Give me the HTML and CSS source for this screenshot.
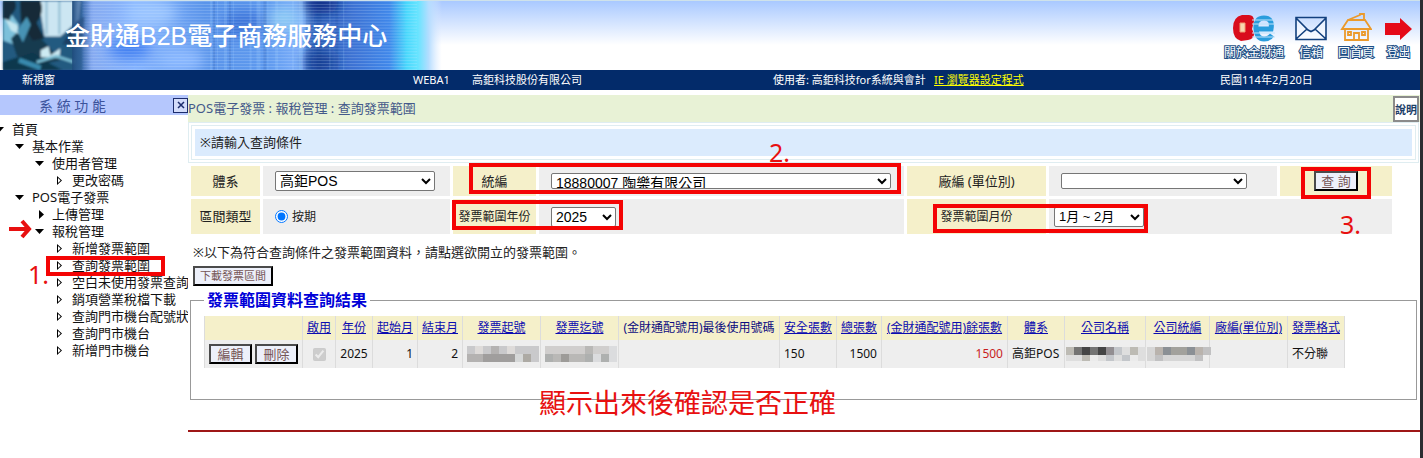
FILE: index.html
```html
<!DOCTYPE html>
<html lang="zh-Hant">
<head>
<meta charset="utf-8">
<title>金財通B2B電子商務服務中心</title>
<link rel="stylesheet" href="styles.css">
</head>
<body>
<div class="page">
  <header class="top">
    <svg class="banner" viewBox="0 0 445 70" aria-hidden="true">
      <defs>
        <linearGradient id="base" x1="0" x2="1" y1="0" y2="0">
          <stop offset="0" stop-color="#1c5072"/><stop offset=".17" stop-color="#2f5f9c"/>
          <stop offset=".2" stop-color="#86aaf0"/><stop offset=".3" stop-color="#88b6ff"/>
          <stop offset=".46" stop-color="#5a94ea"/><stop offset=".6" stop-color="#5c98ee"/>
          <stop offset=".68" stop-color="#7eb0fb"/><stop offset=".71" stop-color="#2f62bc"/>
          <stop offset=".8" stop-color="#3c72d4"/><stop offset=".88" stop-color="#3f87ea"/>
          <stop offset=".92" stop-color="#48d8fc"/><stop offset=".945" stop-color="#66e4ff"/>
          <stop offset=".97" stop-color="#b4ddff"/><stop offset="1" stop-color="#dbe8ff" stop-opacity="0"/>
        </linearGradient>
        <linearGradient id="fade" x1="0" x2="1" y1="0" y2="0">
          <stop offset="0" stop-color="#1f4c7c"/><stop offset="1" stop-color="#5b8ce0" stop-opacity="0"/>
        </linearGradient>
        <pattern id="scan" width="4" height="3" patternUnits="userSpaceOnUse"><rect width="4" height="1" fill="#dcebff" opacity=".22"/></pattern>
        <filter id="soft" x="-40%" y="-40%" width="180%" height="180%"><feGaussianBlur stdDeviation="7"/></filter>
        <filter id="slight"><feGaussianBlur stdDeviation="1"/></filter>
      </defs>
      <rect width="445" height="70" fill="url(#base)"/>
      <g filter="url(#soft)">
        <ellipse cx="128" cy="48" rx="22" ry="11" fill="#3c7cf0"/>
        <ellipse cx="150" cy="12" rx="26" ry="12" fill="#9cc6ff"/>
        <ellipse cx="180" cy="60" rx="24" ry="12" fill="#8ab8ff"/>
        <ellipse cx="245" cy="24" rx="22" ry="14" fill="#3a72d8"/>
        <ellipse cx="285" cy="18" rx="16" ry="12" fill="#8ecbf4"/>
        <ellipse cx="323" cy="3" rx="18" ry="10" fill="#0c2c84"/>
        <ellipse cx="322" cy="62" rx="16" ry="14" fill="#123f96"/>
      </g>
      <g fill="#9fd0ff" opacity=".22">
        <rect x="210" width="2" height="70"/><rect x="217" width="1" height="70"/><rect x="224" width="3" height="70"/>
        <rect x="233" width="1" height="70"/><rect x="250" width="2" height="70"/><rect x="257" width="4" height="70"/>
        <rect x="268" width="1" height="70"/><rect x="276" width="3" height="70"/><rect x="293" width="2" height="70"/>
        <rect x="300" width="4" height="70"/><rect x="331" width="1" height="70"/><rect x="345" width="1" height="70"/>
      </g>
      <g fill="#0c3688" opacity=".14">
        <rect x="213" width="2" height="70"/><rect x="229" width="2" height="70"/><rect x="264" width="3" height="70"/>
        <rect x="307" width="7" height="70"/><rect x="318" width="5" height="70"/><rect x="337" width="3" height="70"/>
      </g>
      <rect x="80" width="340" height="70" fill="url(#scan)"/>
      <g filter="url(#slight)">
        <rect width="80" height="70" fill="#205a80"/>
        <path d="M36 0H78L76 20 58 36H42Z" fill="#cce6f2"/>
        <path d="M44 0V34M57 0V34" stroke="#8fbcd2" stroke-width="2"/>
        <path d="M0 18 6 10 16 24 10 44 0 40Z" fill="#7cc0da"/>
        <path d="M0 0H12Q15 8 9 13L6 20 0 18Z" fill="#132e40"/>
        <path d="M8 38 24 22 30 30 44 44 58 60 40 64 14 56Z" fill="#183a50"/>
        <path d="M17 0H38Q42 12 34 22L42 38 30 40 18 22Z" fill="#142a38"/>
        <path d="M2 18 14 24 17 34 8 30Z" fill="#c4e6f0"/>
        <path d="M14 30 24 16 28 24 20 42Z" fill="#4793b4"/>
        <path d="M74 20 82 16 80 46 60 44Z" fill="#1d3f64"/>
        <path d="M38 50 46 46 48 55 58 48 57 58 38 57Z" fill="#cdeaf2"/>
        <path d="M0 62 30 52 48 64 60 70H0Z" fill="#11384e"/>
        <path d="M34 62 54 56 72 62" stroke="#77bbd2" stroke-width="3" fill="none"/>
        <path d="M16 60 38 68" stroke="#398aae" stroke-width="5"/>
      </g>
      <rect x="70" width="22" height="70" fill="url(#fade)"/>
    </svg>
    <h1 class="brand">金財通B2B電子商務服務中心</h1>
    <nav class="quick">
      <a class="quick-link" href="#about">
        <svg width="44" height="30" viewBox="0 0 44 30" aria-hidden="true">
          <path d="M10 2Q1 4 1 15T9 28L16 27Q22 26 22 21L20 16 22 8Q22 2 17 2Z" fill="#d90c1c"/>
          <path d="M8 10H13V19H8Z" fill="#f8d8b0" stroke="#f29a72" stroke-width="1"/>
          <path d="M26 16H39Q41 5 32 5T24 16Q25 26 32 26 37 26 40 22" fill="none" stroke="#2a9ddd" stroke-width="5"/>
          <path d="M20 7H43M20 11H43M20 20H43M20 24H43" stroke="#bfe2fa" stroke-width="1"/>
        </svg><span>關於金財通</span></a>
      <a class="quick-link" href="#mail">
        <svg width="32" height="30" viewBox="0 0 32 30" aria-hidden="true"><path d="M1 4.500H31V26.500H1ZM1 5 13 17 16 18.500 19 17 31 5M1 26 12 16M31 26 20 16" fill="#fff" fill-opacity=".5" stroke="#12407e" stroke-width="1.600"/></svg><span>信箱</span></a>
      <a class="quick-link" href="#home">
        <svg width="32" height="30" viewBox="0 0 32 30" aria-hidden="true"><g fill="none" stroke="#eb9a2c" stroke-width="1.800"><path d="M2 16 8 7H25L31 16ZM5 16V27H28V16M8 7 20 2V1H24V7M14 27V20H19V27"/><path d="M8 19H11V22H8ZM22 19H25V22H22Z"/></g></svg><span>回首頁</span></a>
      <a class="quick-link" href="#logout">
        <svg width="27" height="30" viewBox="0 0 27 30" aria-hidden="true"><path d="M0 10H15V5L27 16 15 27V22H0Z" fill="#e50a18"/></svg><span>登出</span></a>
    </nav>
  </header>

  <div class="infobar">
    <a href="#new">新視窗</a><span>WEBA1</span><span>高鉅科技股份有限公司</span>
    <span>使用者: 高鉅科技for系統與會計</span><a class="ie" href="#ie">IE 瀏覽器設定程式</a><span>民國114年2月20日</span>
  </div>

  <div class="columns">
    <aside class="side">
      <div class="side-head"><h2>系 統 功 能</h2><button class="close" aria-label="關閉"><svg width="8" height="8" viewBox="0 0 8 8" aria-hidden="true"><path d="M1 1 7 7M7 1 1 7" stroke="#1c2c6c" stroke-width="1.500"/></svg></button></div>
      <ul class="tree">
        <li><span class="node open">首頁</span>
          <ul>
            <li><span class="node open">基本作業</span>
              <ul><li><span class="node open">使用者管理</span>
                <ul><li><a class="node leaf" href="#pw">更改密碼</a></li></ul></li></ul></li>
            <li><span class="node open">POS電子發票</span>
              <ul>
                <li><span class="node shut">上傳管理</span></li>
                <li><span class="node open">報稅管理</span>
                  <ul>
                    <li><a class="node leaf" href="#a">新增發票範圍</a></li>
                    <li><a class="node leaf" href="#b">查詢發票範圍</a></li>
                    <li><a class="node leaf" href="#c">空白未使用發票查詢</a></li>
                    <li><a class="node leaf" href="#d">銷項營業稅檔下載</a></li>
                    <li><a class="node leaf" href="#e">查詢門市機台配號狀</a></li>
                    <li><a class="node leaf" href="#f">查詢門市機台</a></li>
                    <li><a class="node leaf" href="#g">新增門市機台</a></li>
                  </ul></li>
              </ul></li>
          </ul></li>
      </ul>
    </aside>

    <main class="main">
      <div class="crumbs"><span>POS電子發票 : 報稅管理 : 查詢發票範圍</span><button class="help">說明</button></div>
      <div class="notice"><p>※請輸入查詢條件</p></div>
      <form class="query">
        <label class="label" for="sys">體系</label>
        <div class="field"><select id="sys" class="sel sys"><option>高鉅POS</option></select></div>
        <label class="label" for="tax">統編</label>
        <div class="field"><select id="tax" class="sel thin tax"><option>18880007 陶樂有限公司</option></select></div>
        <label class="label" for="unit">廠編 (單位別)</label>
        <div class="field"><select id="unit" class="sel thin unit"><option></option></select></div>
        <div class="label"><button type="button" class="btn search">查 詢</button></div>
        <span class="label tall">區間類型</span>
        <div class="field tall"><label class="radio"><input type="radio" name="kind" checked>按期</label></div>
        <label class="label small tall" for="year">發票範圍年份</label>
        <div class="field tall"><select id="year" class="sel year"><option>2025</option></select></div>
        <label class="label small tall" for="month">發票範圍月份</label>
        <div class="field tall wide"><select id="month" class="sel month"><option>1月 ~ 2月</option></select></div>
      </form>
      <p class="hint">※以下為符合查詢條件之發票範圍資料，請點選欲開立的發票範圍。</p>
      <button class="btn download">下載發票區間</button>
      <fieldset class="result">
        <legend>發票範圍資料查詢結果</legend>
        <table class="grid">
          <colgroup><col class="w98"><col class="w33"><col class="w37"><col class="w45"><col class="w45"><col class="w78"><col class="w78"><col class="w161"><col class="w57"><col class="w45"><col class="w126"><col class="w57"><col class="w81"><col class="w64"><col class="w78"><col class="w57"></colgroup>
          <thead><tr>
            <th></th><th><a href="#s1">啟用</a></th><th><a href="#s2">年份</a></th><th><a href="#s3">起始月</a></th><th><a href="#s4">結束月</a></th><th><a href="#s5">發票起號</a></th><th><a href="#s6">發票迄號</a></th><th>(金財通配號用)最後使用號碼</th><th><a href="#s8">安全張數</a></th><th><a href="#s9">總張數</a></th><th><a href="#s10">(金財通配號用)餘張數</a></th><th><a href="#s11">體系</a></th><th><a href="#s12">公司名稱</a></th><th><a href="#s13">公司統編</a></th><th><a href="#s14">廠編(單位別)</a></th><th><a href="#s15">發票格式</a></th>
          </tr></thead>
          <tbody><tr>
            <td><div class="ops"><button class="btn op">編輯</button><button class="btn op">刪除</button></div></td>
            <td class="mid"><input type="checkbox" checked disabled aria-label="啟用"></td>
            <td class="mid">2025</td><td class="num">1</td><td class="num">2</td>
            <td><svg class="mask" width="72" height="16" viewBox="0 0 72 16" aria-hidden="true"><path fill="#c9c9cb" d="M0 0H72V16H0Z"/><path fill="#dedbd9" d="M8 0H16V8H8ZM40 0H48V8H40Z"/><path fill="#b4b2b1" d="M0 8H16V16H0ZM24 0H32V8H24ZM48 8H40V16H48Z"/><path fill="#a09e9d" d="M16 8H48V16H16Z"/><path fill="#d6d8d8" d="M48 8H56V16H48Z"/><path fill="#adaaa4" d="M56 8H64V16H56Z"/></svg></td>
            <td><svg class="mask" width="72" height="16" viewBox="0 0 72 16" aria-hidden="true"><path fill="#d0cecd" d="M0 0H72V16H0Z"/><path fill="#aeb0af" d="M0 8H8V16H0ZM48 8H40V16H48ZM56 8H64V16H56Z"/><path fill="#b9b8b6" d="M8 8H16V16H8ZM40 0H48V8H40ZM24 8H40V16H24Z"/><path fill="#9d9b98" d="M16 8H24V16H16Z"/><path fill="#dbdcde" d="M64 0H72V16H64ZM48 8H56V16H48Z"/></svg></td>
            <td></td><td>150</td><td class="num">1500</td><td class="num red">1500</td><td>高鉅POS</td>
            <td><svg class="mask name" width="80" height="14" viewBox="0 0 80 14" aria-hidden="true"><path fill="#dedede" d="M0 0H80V14H0Z"/><path fill="#bdbbb4" d="M0 0H8V8H0ZM64 0H72V8H64ZM16 8H24V14H16Z"/><path fill="#747473" d="M8 0H16V8H8ZM24 0H32V8H24Z"/><path fill="#454545" d="M16 0H24V8H16ZM32 0H40V8H32Z"/><path fill="#928e91" d="M40 0H48V8H40Z"/><path fill="#c3c6ca" d="M48 0H56V8H48ZM40 8H48V14H40ZM56 8H64V14H56Z"/><path fill="#ebebeb" d="M24 8H32V14H24ZM64 8H72V14H64Z"/></svg></td>
            <td><svg class="mask name" width="64" height="14" viewBox="0 0 64 14" aria-hidden="true"><path fill="#d6d6d6" d="M0 0H56V14H0Z"/><path fill="#b9b3ad" d="M8 0H16V8H8ZM48 0H56V8H48Z"/><path fill="#8b9095" d="M16 0H24V8H16ZM40 0H48V8H40Z"/><path fill="#a2a19c" d="M24 0H40V8H24Z"/><path fill="#c1c1c2" d="M8 8H16V14H8ZM48 8H56V14H48ZM56 0H64V8H56Z"/></svg></td>
            <td></td><td>不分聯</td>
          </tr></tbody>
        </table>
      </fieldset>
      <hr class="rule">
    </main>
  </div>

  <div class="notes">
    <div class="box box-menu"></div><div class="box box-tax"></div><div class="box box-year"></div><div class="box box-month"></div><div class="box box-search"></div>
    <span class="step step1">1.</span><span class="step step2">2.</span><span class="step step3">3.</span>
    <svg class="arrow" width="24" height="20" viewBox="0 0 24 20" aria-hidden="true"><path d="M0 10H19M13 2 20 10 13 18" fill="none" stroke="#e81010" stroke-width="4"/></svg>
    <span class="remark">顯示出來後確認是否正確</span>
  </div>
</div>
</body>
</html>
```
FILE: styles.css
```css
* { box-sizing: border-box; }
body {
  margin: 0;
  background: #fff;
  color: #222;
  font: 13px/17px "Noto Sans", "Noto Sans CJK TC", sans-serif;
}
h1, h2, p, ul { margin: 0; padding: 0; }
ul { list-style: none; }
button, select, input { font-family: inherit; margin: 0; }
.page {
  position: relative;
  min-height: 100vh;
  border-right: 3px solid #2b2d31;
  overflow: hidden;
}

/* header */
.top {
  position: relative;
  display: flex;
  align-items: center;
  height: 70px;
  border-top: 1px solid #cfe2ea;
  background: linear-gradient(#a9c9ff, #fff 44px);
}
.banner { position: absolute; left: 0; top: 0; width: 445px; height: 69px; }
.brand {
  position: relative;
  padding-left: 65px;
  color: #fff;
  font: 500 25px/36px "Liberation Sans", "Noto Sans CJK TC", sans-serif;
}
.quick { display: flex; gap: 11px; margin-left: auto; padding: 4px 8px 0 0; }
.quick-link {
  display: flex;
  flex-direction: column;
  align-items: center;
  gap: 1px;
  color: #fff;
  font-size: 12px;
  line-height: 18px;
  text-decoration: none;
}
.quick-link span {
  -webkit-text-stroke: 2px #1d4f86;
  paint-order: stroke fill;
}
.infobar {
  display: grid;
  grid-template-columns: 391fr 59fr 301fr 161fr 286fr 200fr;
  padding-left: 22px;
  height: 20px;
  background: #032b6a;
  color: #fff;
  font-size: 11px;
  line-height: 20px;
  white-space: nowrap;
}
.infobar a { color: #fff; text-decoration: none; }
.infobar .ie { color: #ff0; text-decoration: underline; }

/* columns */
.columns { display: flex; padding-top: 5px; }
.side { flex: 0 0 188px; overflow: hidden; }
.side-head {
  display: flex;
  align-items: center;
  justify-content: space-between;
  height: 20px;
  padding: 0 0 0 39px;
  background: #b5c7fd;
}
.side-head h2 { color: #3c539c; font-size: 14px; font-weight: 400; }
.close {
  display: grid;
  place-items: center;
  width: 15px;
  height: 15px;
  padding: 0;
  border: 1px solid #1c2c6c;
  background: #d3dcfa;
}
.tree { padding-top: 6px; white-space: nowrap; color: #111; }
.tree ul { padding-left: 20px; }
.node {
  display: flex;
  align-items: center;
  gap: 8px;
  margin-left: -5px;
  color: #111;
  text-decoration: none;
}
.node::before { content: ""; flex: none; width: 9px; height: 5px; background: #000; clip-path: polygon(0 0, 100% 0, 50% 100%); }
.node.shut::before { width: 5px; height: 9px; margin: 0 0 0 4px; clip-path: polygon(0 0, 100% 50%, 0 100%); }
.node.leaf::before {
  width: 5px;
  height: 9px;
  margin: 0 2px 0 2px;
  clip-path: polygon(evenodd, 0 0, 100% 50%, 0 100%, 0 0, 20% 22%, 20% 78%, 72% 50%, 20% 22%);
}

/* main */
.main { flex: 1; min-width: 0; }
.crumbs {
  display: flex;
  justify-content: space-between;
  align-items: center;
  height: 27px;
  padding-right: 1px;
  background: #e8f2d6;
  color: #44598a;
}
.help {
  display: flex;
  align-items: center;
  justify-content: center;
  width: 26px;
  height: 26px;
  padding: 0;
  border: 2px solid #8b8b8b;
  background: #fff;
  color: #1c4068;
  font-size: 11px;
  font-weight: 700;
  white-space: nowrap;
}
.notice {
  margin-right: 1px;
  padding: 2px;
  border: 1px solid #dfedf1;
}
.notice p {
  padding: 8px;
  border: 1px solid #dfedf1;
  background: #dbebfd;
  box-shadow: inset 0 0 0 3px #fff;
}
.query {
  display: grid;
  grid-template-columns: 69fr 187fr 83fr 365fr 139fr 228fr 112fr;
  gap: 3px;
  margin: 3px 28px 0 3px;
}
.label, .field { display: flex; align-items: center; min-width: 0; height: 30px; white-space: nowrap; }
.label { justify-content: center; background: #f5f0ca; }
.field { padding-left: 12px; background: #eee; }
.tall { height: 35px; }
.small { font-size: 12px; }
.wide { grid-column: span 2; padding-left: 5px; }
.sel {
  height: 20px;
  padding: 0;
  border: 1px solid #767676;
  border-radius: 2px;
  background: #fff;
  color: #000;
  font: 14px "Liberation Sans", "Noto Sans CJK TC", sans-serif;
}
.thin { height: 16px; }
.sys { width: 160px; }
.tax { width: 340px; }
.unit { width: 186px; }
.year { width: 65px; }
.month { width: 90px; font-size: 13px; }
.radio { display: flex; align-items: center; gap: 4px; font-size: 12px; }
.radio input { width: 13px; height: 13px; }
.btn {
  padding: 0;
  border: 2px solid;
  border-color: #4b4b4b #000 #000 #4b4b4b;
  background: #edf0fa;
  color: #755555;
  line-height: 16px;
}
.search { width: 44px; height: 20px; font-size: 13px; }
.hint { padding: 10px 5px 5px; line-height: 17px; }
.download { display: block; width: 80px; height: 20px; margin-left: 5px; font-size: 11px; }
.result {
  margin: 5px 3px 0 2px;
  padding: 7px 13px 31px;
  min-width: 0;
  border: 1px solid #999;
}
.result legend {
  padding: 0 3px;
  color: #0000d8;
  font-size: 16px;
  font-weight: 700;
  line-height: 18px;
}
.grid {
  table-layout: fixed;
  width: 1140px;
  border-collapse: collapse;
  font-size: 12px;
  line-height: 16px;
  color: #111;
}
.grid th, .grid td { padding: 0 4px; border: 0 solid #dcdcdc; border-width: 0 1px; white-space: nowrap; text-align: left; }
.grid th { height: 24px; padding: 0; background: #f5f0ca; color: #0c0c80; font-weight: 400; text-align: center; }
.grid td { height: 28px; background: #eee; }
.grid a { color: #0c0cb0; }
.grid .num { text-align: right; }
.grid .mid { text-align: center; }
.grid .red { color: #c81e1e; }
.grid input { display: block; width: 13px; height: 13px; margin: 0 auto; }
.ops { display: flex; gap: 3px; }
.op { width: 43px; height: 20px; font-size: 13px; }
.mask { display: block; margin: 0; }
.mask.name { margin-left: -3px; }
.w33 { width: 33px; } .w37 { width: 37px; } .w45 { width: 45px; } .w57 { width: 57px; }
.w64 { width: 64px; } .w78 { width: 78px; } .w81 { width: 81px; } .w98 { width: 98px; }
.w126 { width: 126px; } .w161 { width: 161px; }
.rule { height: 2px; margin: 30px 0 0; border: 0; background: #9e1616; }

/* hand-placed annotations over the page */
.notes { position: absolute; inset: 0; pointer-events: none; color: #e81010; }
.box { position: absolute; border: 4px solid #f40404; }
.box-menu { left: 46px; top: 256px; width: 119px; height: 20px; }
.box-tax { left: 469px; top: 163px; width: 432px; height: 31px; }
.box-year { left: 452px; top: 200px; width: 171px; height: 30px; }
.box-month { left: 933px; top: 204px; width: 215px; height: 29px; }
.box-search { left: 1301px; top: 167px; width: 70px; height: 32px; }
.step { position: absolute; font: 400 25px/28px "Noto Sans", sans-serif; }
.step1 { left: 28px; top: 260px; }
.step2 { left: 769px; top: 138px; }
.step3 { left: 1340px; top: 210px; }
.arrow { position: absolute; left: 9px; top: 219px; }
.remark { position: absolute; left: 539px; top: 384px; font: 400 27px/36px "Noto Sans CJK TC", sans-serif; white-space: nowrap; }
```
